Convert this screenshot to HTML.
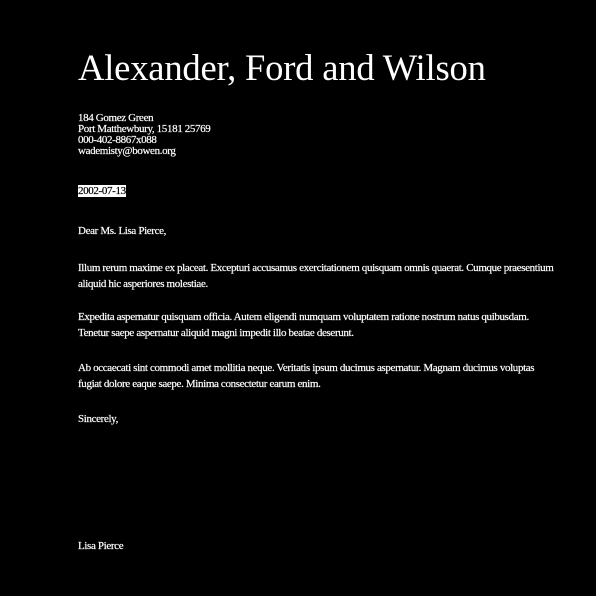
<!DOCTYPE html>
<html><head><style>
html,body{margin:0;padding:0;background:#000;width:596px;height:596px;overflow:hidden}
body{font-family:"Liberation Serif",serif;color:#fff;font-size:11px;position:relative;letter-spacing:-0.36px;-webkit-text-stroke:0.2px #fff}
.a{position:absolute;left:78px;white-space:nowrap}
h1{position:absolute;left:78px;top:46px;margin:0;font-weight:normal;font-size:36.6px;line-height:44px;white-space:nowrap;letter-spacing:-0.2px;-webkit-text-stroke:0}
.l11{line-height:11px}
.l16{line-height:16px}
.d{background:#fff;color:#000;-webkit-text-stroke:0.2px #000}
</style></head><body>
<h1>Alexander, Ford and Wilson</h1>
<div class="a l11" style="top:113px">184 Gomez Green<br>Port Matthewbury, 15181 25769<br>000-402-8867x088<br>wademisty@bowen.org</div>
<div class="a" style="top:185px;line-height:12px"><span class="d">2002-07-13</span></div>
<div class="a l16" style="top:223px">Dear Ms. Lisa Pierce,</div>
<div class="a l16" style="top:260px">Illum rerum maxime ex placeat. Excepturi accusamus exercitationem quisquam omnis quaerat. Cumque praesentium<br>aliquid hic asperiores molestiae.</div>
<div class="a l16" style="top:309px">Expedita aspernatur quisquam officia. Autem eligendi numquam voluptatem ratione nostrum natus quibusdam.<br>Tenetur saepe aspernatur aliquid magni impedit illo beatae deserunt.</div>
<div class="a l16" style="top:360px">Ab occaecati sint commodi amet mollitia neque. Veritatis ipsum ducimus aspernatur. Magnam ducimus voluptas<br>fugiat dolore eaque saepe. Minima consectetur earum enim.</div>
<div class="a l16" style="top:411px">Sincerely,</div>
<div class="a l16" style="top:538px">Lisa Pierce</div>
</body></html>
